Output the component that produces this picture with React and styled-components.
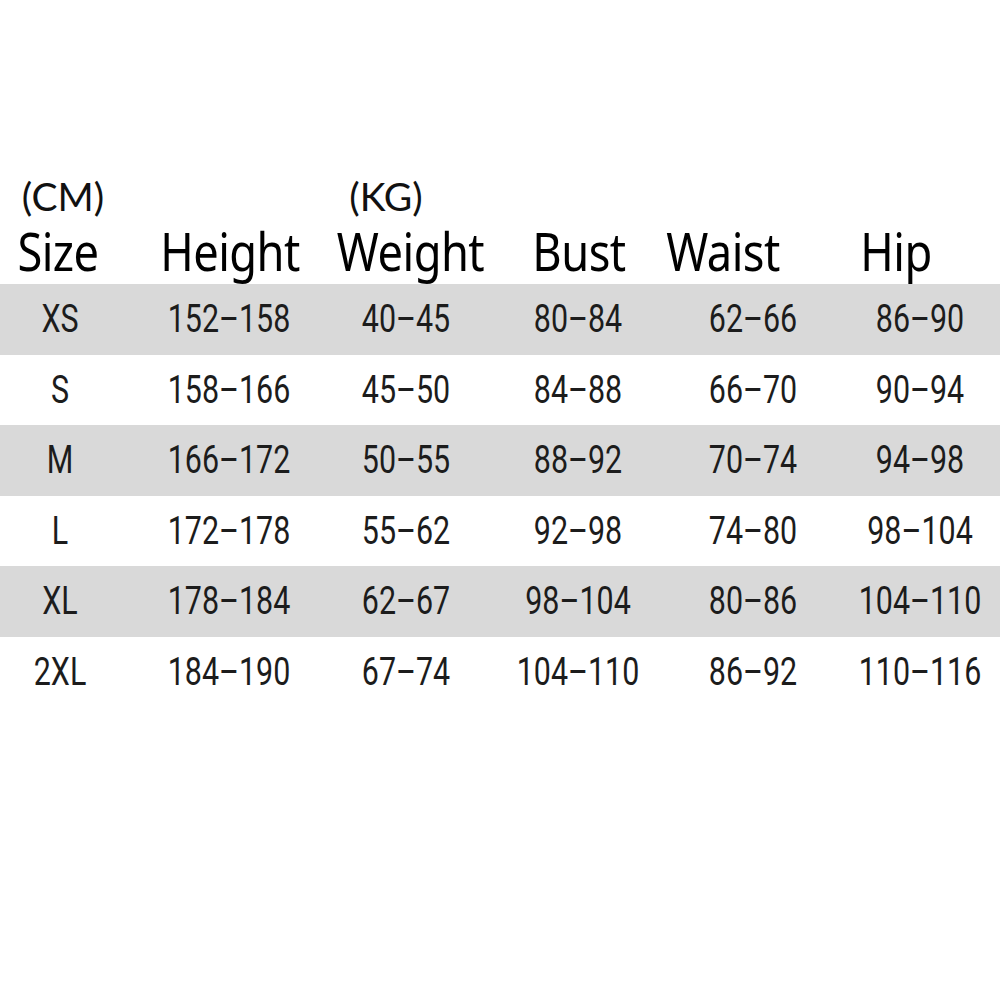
import React from "react";
import styled, { createGlobalStyle } from "styled-components";

const GlobalStyle = createGlobalStyle`
  html, body {
    margin: 0;
    padding: 0;
    background: #ffffff;
  }
  body {
    font-family: "Noto Sans", "DejaVu Sans", sans-serif;
  }
`;

const COLS = [120, 218, 136, 208, 142, 176];

const Page = styled.div`
  width: 1000px;
  height: 1000px;
  background: #fff;
  padding-top: 170px;
  box-sizing: border-box;
  overflow: hidden;
`;

const Grid = styled.div`
  display: grid;
  grid-template-columns: ${COLS.map((c) => `${c}px`).join(" ")};
`;

const UnitRow = styled(Grid)`
  height: 52px;
  align-items: center;
`;

const Unit = styled.div`
  font-family: Lato, "Noto Sans", sans-serif;
  font-size: 39px;
  color: #111;
  text-align: center;
  transform: translateX(${(p) => p.$shift || 0}px);
  line-height: 1;
`;

const HeadRow = styled(Grid)`
  height: 62px;
  align-items: start;
`;

const Head = styled.div`
  font-family: "Noto Sans", sans-serif;
  font-size: 52px;
  color: #000;
  text-align: center;
  letter-spacing: -0.6px;
  transform: translateX(${(p) => p.$shift || 0}px) scaleX(0.87);
  line-height: 1;
  padding-top: 3px;
`;

const Row = styled(Grid)`
  height: ${(p) => (p.$tall ? 71 : 70)}px;
  align-items: center;
  background: ${(p) => (p.$shaded ? "#d9d9d9" : "#ffffff")};
`;

const Cell = styled.div`
  font-family: Roboto, "Noto Sans", sans-serif;
  font-size: 39px;
  color: #1c1c1c;
  text-align: center;
  line-height: 1;
  transform: translateX(${(p) => p.$shift || 0}px) scaleX(0.78);
`;

const headers = [
  { label: "Size", shift: -2 },
  { label: "Height", shift: 1 },
  { label: "Weight", shift: -10 },
  { label: "Bust", shift: 1 },
  { label: "Waist", shift: -30 },
  { label: "Hip", shift: -16 },
];

const rows = [
  ["XS", "152-158", "40-45", "80-84", "62-66", "86-90"],
  ["S", "158-166", "45-50", "84-88", "66-70", "90-94"],
  ["M", "166-172", "50-55", "88-92", "70-74", "94-98"],
  ["L", "172-178", "55-62", "92-98", "74-80", "98-104"],
  ["XL", "178-184", "62-67", "98-104", "80-86", "104-110"],
  ["2XL", "184-190", "67-74", "104-110", "86-92", "110-116"],
];

const App = () => {
  return (
    <Page>
      <GlobalStyle />
      <UnitRow>
        <Unit $shift={3}>(CM)</Unit>
        <div />
        <Unit $shift={-20}>(KG)</Unit>
      </UnitRow>
      <HeadRow>
        {headers.map((h) => (
          <Head key={h.label} $shift={h.shift}>
            {h.label}
          </Head>
        ))}
      </HeadRow>
      {rows.map((r, i) => (
        <Row key={r[0]} $shaded={i % 2 === 0} $tall={i % 2 === 0}>
          {r.map((v, j) => (
            <Cell key={j} $shift={j === 5 ? 8 : 0}>
              {v.replace("-", "\u2013")}
            </Cell>
          ))}
        </Row>
      ))}
    </Page>
  );
};

export default App;
